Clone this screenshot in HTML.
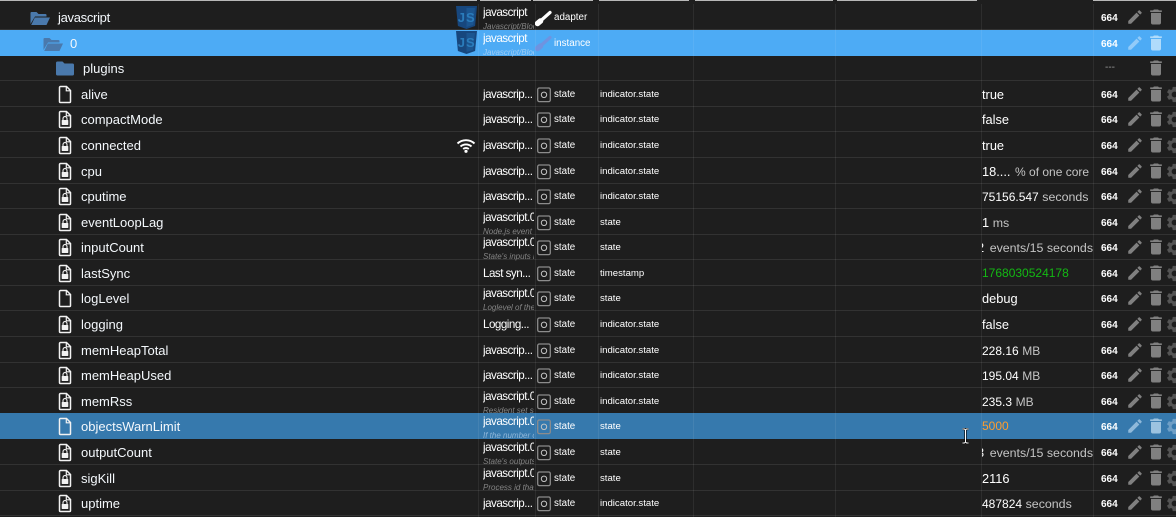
<!DOCTYPE html>
<html><head><meta charset="utf-8"><style>
html,body{margin:0;padding:0;background:#1e1e1e}
body{width:1176px;height:517px;position:relative;overflow:hidden;font-family:"Liberation Sans",sans-serif;color:#fff}
.r{position:absolute;left:0;width:1176px;height:25.6px;box-sizing:border-box;border-bottom:1px solid #323232}
.r>*{position:absolute;margin-top:1px}
.n{left:81px;top:0;line-height:25px;font-size:13px;color:#f4f8fc}
.c{left:483px;top:0;width:51px;overflow:hidden;white-space:nowrap;line-height:25px;font-size:11.6px;letter-spacing:-.5px}
.c2{left:483px;top:2px;width:51px;overflow:hidden;white-space:nowrap;line-height:12px;font-size:11.6px;letter-spacing:-.5px}
.s{left:483px;top:17px;width:51px;overflow:hidden;white-space:nowrap;line-height:10px;font-size:8px;font-style:italic;color:#858585}
.t{left:554px;top:0;line-height:25px;font-size:9.8px}
.k{left:600px;top:0;line-height:25px;font-size:9.6px}
.v{left:982px;top:0;width:111px;overflow:hidden;white-space:nowrap;line-height:25px;font-size:12.8px}
.v i{font-style:normal;color:#c4c4c4;font-size:12.4px}
.p{left:1101px;top:1px;line-height:25px;font-size:10px;font-weight:bold}
.f{left:58px;top:3px;width:14px;height:19px}
.st{left:537px;top:5px;width:14px;height:16px}
.e{left:1126px;top:3px;width:18px;height:18px;fill:#808080}
.d{left:1146px;top:2px;width:20px;height:20px;fill:#808080}
.g{left:1165px;top:3px;width:19px;height:19px;fill:#545454}
.js{left:456px;width:21px;height:23px}
.vl{position:absolute;top:4px;width:1px;height:513px;background:rgba(255,255,255,.07)}
.h{position:absolute;top:0;height:1px;background:#b8b8b8}
</style></head><body>
<svg width="0" height="0" style="position:absolute">
<defs>
<symbol id="file" viewBox="0 0 14 19"><path d="M2.5 1.5h6l4 4v11a1 1 0 0 1-1 1h-9a1 1 0 0 1-1-1v-14a1 1 0 0 1 1-1z" fill="none" stroke="#f2f2f2" stroke-width="1.5"/><path d="M8.3 1.5v4.3h4.2" fill="none" stroke="#f2f2f2" stroke-width="1.2"/></symbol>
<symbol id="lock" viewBox="0 0 14 19"><path d="M2.5 1.5h6l4 4v11a1 1 0 0 1-1 1h-9a1 1 0 0 1-1-1v-14a1 1 0 0 1 1-1z" fill="none" stroke="#f2f2f2" stroke-width="1.5"/><path d="M8.3 1.5v4.3h4.2" fill="none" stroke="#f2f2f2" stroke-width="1.2"/><rect x="3.7" y="10" width="6.6" height="5" rx=".6" fill="#f2f2f2"/><path d="M5 10V8.6a2 2 0 0 1 4 0V10" fill="none" stroke="#f2f2f2" stroke-width="1.1"/></symbol>
<symbol id="state" viewBox="0 0 14 16"><rect x=".7" y="1" width="12.6" height="13.6" rx="1.6" fill="none" stroke="#8c8c8c" stroke-width="1.3"/><circle cx="7" cy="7.8" r="2.7" fill="none" stroke="#c4c4c4" stroke-width="1"/></symbol>
<symbol id="edit" viewBox="0 0 24 24"><path d="M3 17.25V21h3.75L17.81 9.94l-3.75-3.75L3 17.25zM20.71 7.04c.39-.39.39-1.02 0-1.41l-2.34-2.34c-.39-.39-1.02-.39-1.41 0l-1.83 1.83 3.75 3.75 1.83-1.83z"/></symbol>
<symbol id="del" viewBox="0 0 24 24"><path d="M6 19c0 1.1.9 2 2 2h8c1.1 0 2-.9 2-2V7H6v12zM19 4h-3.5l-1-1h-5l-1 1H5v2h14V4z"/></symbol>
<symbol id="gear" viewBox="0 0 24 24"><path d="M19.14 12.94c.04-.3.06-.61.06-.94 0-.32-.02-.64-.07-.94l2.03-1.58c.18-.14.23-.41.12-.61l-1.92-3.32c-.12-.22-.37-.29-.59-.22l-2.39.96c-.5-.38-1.03-.7-1.62-.94l-.36-2.54c-.04-.24-.24-.41-.48-.41h-3.84c-.24 0-.43.17-.47.41l-.36 2.54c-.59.24-1.13.57-1.62.94l-2.39-.96c-.22-.08-.47 0-.59.22L2.74 8.87c-.12.21-.08.47.12.61l2.03 1.58c-.05.3-.09.63-.09.94s.02.64.07.94l-2.03 1.58c-.18.14-.23.41-.12.61l1.92 3.32c.12.22.37.29.59.22l2.39-.96c.5.38 1.03.7 1.62.94l.36 2.54c.05.24.24.41.48.41h3.84c.24 0 .44-.17.47-.41l.36-2.54c.59-.24 1.13-.56 1.62-.94l2.39.96c.22.08.47 0 .59-.22l1.92-3.32c.12-.22.07-.47-.12-.61l-2.01-1.58zM12 15.6c-1.98 0-3.6-1.62-3.6-3.6s1.62-3.6 3.6-3.6 3.6 1.62 3.6 3.6-1.62 3.6-3.6 3.6z"/></symbol>
<symbol id="jsi" viewBox="0 0 21 23"><path d="M0 0h21l-1.9 20L10.5 23 1.9 20z" fill="#17477e"/><path d="M10.5 2v19l6.8-2L18.9 2z" fill="#1b5590"/><text x="10.7" y="16" text-anchor="middle" font-family="Liberation Sans" font-weight="bold" font-size="13" letter-spacing="1" fill="#2a7cbc">JS</text></symbol>
<symbol id="fo" viewBox="0 0 20 14"><path d="M.5 13V2a1 1 0 0 1 1-1h5l2 2h7a1 1 0 0 1 1 1v1.5H5z" fill="#4a79ac"/><path d="M4.8 6.5H20L16.5 14H1.2z" fill="#4a79ac"/></symbol>
</defs></svg>

<div class="r" style="top:4px"><svg style="left:30px;top:6px;width:20px;height:14px"><use href="#fo"/></svg><span class="n" style="left:58px;letter-spacing:-.3px">javascript</span><svg class="js" style="top:1px"><use href="#jsi"/></svg><span class="c2">javascript</span><span class="s">Javascript/Blockly</span><svg style="left:535px;top:5px;width:17px;height:17px"><path d="M6 10.5L15 2.5" stroke="#fff" stroke-width="3.2" stroke-linecap="round" fill="none"/><path d="M2.5 13.5L5.5 11" stroke="#fff" stroke-width="5.5" stroke-linecap="round"/></svg><span class="t">adapter</span><span class="p">664</span><svg class="e"><use href="#edit"/></svg><svg class="d"><use href="#del"/></svg></div>

<div class="r" style="top:30px;height:25.6px;background:#4dabf5;border-bottom-color:#4dabf5"><svg style="left:43px;top:6px;width:20px;height:14px"><use href="#fo"/></svg><span class="n" style="left:70px">0</span><svg class="js" style="top:0"><use href="#jsi"/></svg><span class="c2">javascript</span><span class="s" style="color:#9fcdf5">Javascript/Blockly</span><svg style="left:535px;top:4px;width:17px;height:17px"><path d="M6 10.5L15 2.5" stroke="#6f93e0" stroke-width="3.2" stroke-linecap="round" fill="none"/><path d="M2.5 13.5L5.5 11" stroke="#6f93e0" stroke-width="5.5" stroke-linecap="round"/></svg><span class="t">instance</span><span class="p">664</span><svg class="e" style="fill:#92cbf9"><use href="#edit"/></svg><svg class="d" style="fill:#b0dbfb"><use href="#del"/></svg></div>

<div class="r" style="top:55px"><svg style="left:56px;top:5px;width:18px;height:15px"><path d="M0 2a1.5 1.5 0 0 1 1.5-1.5h5l2 2h8A1.5 1.5 0 0 1 18 4v9a1.5 1.5 0 0 1-1.5 1.5h-15A1.5 1.5 0 0 1 0 13z" fill="#4a79ac"/></svg><span class="n" style="left:83px">plugins</span><span class="p" style="left:1105px;color:#999;font-weight:normal;top:-1px">---</span><svg class="d"><use href="#del"/></svg></div>

<div class="r" style="top:81px"><svg class="f"><use href="#file"/></svg><span class="n">alive</span><span class="c">javascrip...</span><svg class="st"><use href="#state"/></svg><span class="t">state</span><span class="k">indicator.state</span><span class="v">true</span><span class="p">664</span><svg class="e"><use href="#edit"/></svg><svg class="d"><use href="#del"/></svg><svg class="g"><use href="#gear"/></svg></div>

<div class="r" style="top:106px"><svg class="f"><use href="#lock"/></svg><span class="n">compactMode</span><span class="c">javascrip...</span><svg class="st"><use href="#state"/></svg><span class="t">state</span><span class="k">indicator.state</span><span class="v">false</span><span class="p">664</span><svg class="e"><use href="#edit"/></svg><svg class="d"><use href="#del"/></svg><svg class="g"><use href="#gear"/></svg></div>

<div class="r" style="top:132px"><svg class="f"><use href="#lock"/></svg><span class="n">connected</span><svg style="left:456px;top:5px;width:20px;height:15px"><path d="M1.5 5.5a12.5 12.5 0 0 1 17 0M4.5 8.5a8.3 8.3 0 0 1 11 0M7.2 11a4.3 4.3 0 0 1 5.6 0" fill="none" stroke="#fff" stroke-width="1.9"/><circle cx="10" cy="13.3" r="1.6" fill="#fff"/></svg><span class="c">javascrip...</span><svg class="st"><use href="#state"/></svg><span class="t">state</span><span class="k">indicator.state</span><span class="v">true</span><span class="p">664</span><svg class="e"><use href="#edit"/></svg><svg class="d"><use href="#del"/></svg><svg class="g"><use href="#gear"/></svg></div>

<div class="r" style="top:158px"><svg class="f"><use href="#lock"/></svg><span class="n">cpu</span><span class="c">javascrip...</span><svg class="st"><use href="#state"/></svg><span class="t">state</span><span class="k">indicator.state</span><span class="v">18.... <i style="margin-left:1px;font-size:12px">% of one core</i></span><span class="p">664</span><svg class="e"><use href="#edit"/></svg><svg class="d"><use href="#del"/></svg><svg class="g"><use href="#gear"/></svg></div>

<div class="r" style="top:183px"><svg class="f"><use href="#lock"/></svg><span class="n">cputime</span><span class="c">javascrip...</span><svg class="st"><use href="#state"/></svg><span class="t">state</span><span class="k">indicator.state</span><span class="v"><span style="font-size:12px">75156.547</span> <i>seconds</i></span><span class="p">664</span><svg class="e"><use href="#edit"/></svg><svg class="d"><use href="#del"/></svg><svg class="g"><use href="#gear"/></svg></div>

<div class="r" style="top:209px"><svg class="f"><use href="#lock"/></svg><span class="n">eventLoopLag</span><span class="c2">javascript.0.eventLoopLag</span><span class="s">Node.js event loop lag</span><svg class="st"><use href="#state"/></svg><span class="t">state</span><span class="k">state</span><span class="v">1 <i>ms</i></span><span class="p">664</span><svg class="e"><use href="#edit"/></svg><svg class="d"><use href="#del"/></svg><svg class="g"><use href="#gear"/></svg></div>

<div class="r" style="top:234px"><svg class="f"><use href="#lock"/></svg><span class="n">inputCount</span><span class="c2">javascript.0.inputCount</span><span class="s">State's inputs in 15 sec</span><svg class="st"><use href="#state"/></svg><span class="t">state</span><span class="k">state</span><span class="v"><span style="margin-left:-5px;margin-right:2px">2</span> <i>events/15 seconds</i></span><span class="p">664</span><svg class="e"><use href="#edit"/></svg><svg class="d"><use href="#del"/></svg><svg class="g"><use href="#gear"/></svg></div>

<div class="r" style="top:260px"><svg class="f"><use href="#lock"/></svg><span class="n">lastSync</span><span class="c">Last syn...</span><svg class="st"><use href="#state"/></svg><span class="t">state</span><span class="k">timestamp</span><span class="v" style="color:#14b814;font-size:12px">1768030524178</span><span class="p">664</span><svg class="e"><use href="#edit"/></svg><svg class="d"><use href="#del"/></svg><svg class="g"><use href="#gear"/></svg></div>

<div class="r" style="top:285px"><svg class="f"><use href="#file"/></svg><span class="n">logLevel</span><span class="c2">javascript.0.logLevel</span><span class="s">Loglevel of the adapter</span><svg class="st"><use href="#state"/></svg><span class="t">state</span><span class="k">state</span><span class="v">debug</span><span class="p">664</span><svg class="e"><use href="#edit"/></svg><svg class="d"><use href="#del"/></svg><svg class="g"><use href="#gear"/></svg></div>

<div class="r" style="top:311px"><svg class="f"><use href="#lock"/></svg><span class="n">logging</span><span class="c">Logging...</span><svg class="st"><use href="#state"/></svg><span class="t">state</span><span class="k">indicator.state</span><span class="v">false</span><span class="p">664</span><svg class="e"><use href="#edit"/></svg><svg class="d"><use href="#del"/></svg><svg class="g"><use href="#gear"/></svg></div>

<div class="r" style="top:337px"><svg class="f"><use href="#lock"/></svg><span class="n">memHeapTotal</span><span class="c">javascrip...</span><svg class="st"><use href="#state"/></svg><span class="t">state</span><span class="k">indicator.state</span><span class="v"><span style="font-size:12px">228.16</span> <i style="font-size:12px">MB</i></span><span class="p">664</span><svg class="e"><use href="#edit"/></svg><svg class="d"><use href="#del"/></svg><svg class="g"><use href="#gear"/></svg></div>

<div class="r" style="top:362px"><svg class="f"><use href="#lock"/></svg><span class="n">memHeapUsed</span><span class="c">javascrip...</span><svg class="st"><use href="#state"/></svg><span class="t">state</span><span class="k">indicator.state</span><span class="v"><span style="font-size:12px">195.04</span> <i style="font-size:12px">MB</i></span><span class="p">664</span><svg class="e"><use href="#edit"/></svg><svg class="d"><use href="#del"/></svg><svg class="g"><use href="#gear"/></svg></div>

<div class="r" style="top:388px"><svg class="f"><use href="#lock"/></svg><span class="n">memRss</span><span class="c2">javascript.0.memRss</span><span class="s">Resident set size</span><svg class="st"><use href="#state"/></svg><span class="t">state</span><span class="k">indicator.state</span><span class="v"><span style="font-size:12px">235.3</span> <i style="font-size:12px">MB</i></span><span class="p">664</span><svg class="e"><use href="#edit"/></svg><svg class="d"><use href="#del"/></svg><svg class="g"><use href="#gear"/></svg></div>

<div class="r" style="top:413px;height:26px;background:#3679ad;border-bottom-color:#3679ad"><svg class="f"><use href="#file"/></svg><span class="n">objectsWarnLimit</span><span class="c2">javascript.0.objectsWarnLimit</span><span class="s" style="color:#8fb6d8">If the number of objects</span><svg class="st"><use href="#state"/></svg><span class="t">state</span><span class="k">state</span><span class="v" style="color:#ff9d2e;font-size:12px">5000</span><span class="p">664</span><svg class="e" style="fill:#8fb9da"><use href="#edit"/></svg><svg class="d" style="fill:#9cc3e0"><use href="#del"/></svg><svg class="g" style="fill:#6f9fc6"><use href="#gear"/></svg></div>

<div class="r" style="top:439px"><svg class="f"><use href="#lock"/></svg><span class="n">outputCount</span><span class="c2">javascript.0.outputCount</span><span class="s">State's outputs in 15 sec</span><svg class="st"><use href="#state"/></svg><span class="t">state</span><span class="k">state</span><span class="v"><span style="margin-left:-5px;margin-right:2px">3</span> <i>events/15 seconds</i></span><span class="p">664</span><svg class="e"><use href="#edit"/></svg><svg class="d"><use href="#del"/></svg><svg class="g"><use href="#gear"/></svg></div>

<div class="r" style="top:465px"><svg class="f"><use href="#lock"/></svg><span class="n">sigKill</span><span class="c2">javascript.0.sigKill</span><span class="s">Process id that</span><svg class="st"><use href="#state"/></svg><span class="t">state</span><span class="k">state</span><span class="v">2116</span><span class="p">664</span><svg class="e"><use href="#edit"/></svg><svg class="d"><use href="#del"/></svg><svg class="g"><use href="#gear"/></svg></div>

<div class="r" style="top:490px"><svg class="f"><use href="#lock"/></svg><span class="n">uptime</span><span class="c">javascrip...</span><svg class="st"><use href="#state"/></svg><span class="t">state</span><span class="k">indicator.state</span><span class="v"><span style="font-size:12px">487824</span> <i>seconds</i></span><span class="p">664</span><svg class="e"><use href="#edit"/></svg><svg class="d"><use href="#del"/></svg><svg class="g"><use href="#gear"/></svg></div>

<div class="vl" style="left:478px"></div><div class="vl" style="left:535px"></div><div class="vl" style="left:598px"></div><div class="vl" style="left:693px"></div><div class="vl" style="left:835px"></div><div class="vl" style="left:981px"></div><div class="vl" style="left:1093px"></div>

<div class="h" style="left:0;width:477px"></div><div class="h" style="left:480px;width:51px"></div><div class="h" style="left:533px;width:60px"></div><div class="h" style="left:599px;width:90px"></div><div class="h" style="left:695px;width:138px"></div><div class="h" style="left:837px;width:140px"></div><div class="h" style="left:1093px;width:83px"></div>

<svg style="position:absolute;left:961px;top:428px;width:9px;height:17px"><path d="M1.5 1h2l1 1 1-1h2M4.5 2v12M1.5 15h2l1-1 1 1h2" fill="none" stroke="#000" stroke-width="2.2"/><path d="M1.5 1h2l1 1 1-1h2M4.5 2v12M1.5 15h2l1-1 1 1h2" fill="none" stroke="#fff" stroke-width="1"/></svg>
</body></html>
